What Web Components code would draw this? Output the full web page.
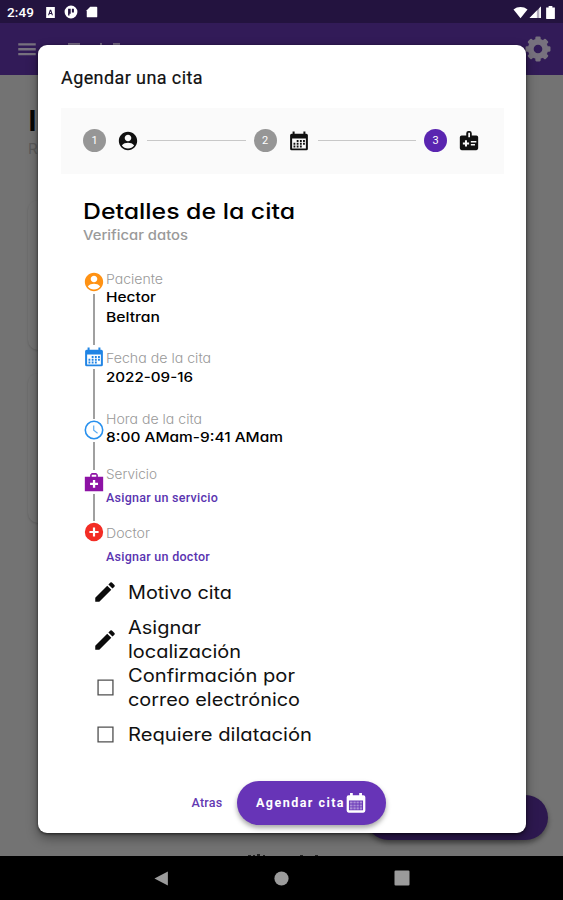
<!DOCTYPE html>
<html lang="es">
<head>
<meta charset="utf-8">
<title>Agendar una cita</title>
<style>
html,body{margin:0;width:563px;height:900px;overflow:hidden;background:#000}
</style>
</head>
<body>
<clinic-screen></clinic-screen>
<script>
const ICONS = {
  user: '<path fill-rule="evenodd" d="M12 2C6.48 2 2 6.48 2 12s4.480 10 10 10 10-4.480 10-10S17.520 2 12 2zm0 3.200c2 0 3.600 1.600 3.600 3.600S14 12.400 12 12.400 8.400 10.800 8.400 8.800 10 5.200 12 5.200zM5.300 17c1.200-2.200 4.500-3 6.700-3s5.500.8 6.700 3c-1.500 2.100-3.900 3.300-6.700 3.300S6.800 19.100 5.300 17z"/>',
  calendar: '<path fill-rule="evenodd" d="M5 1.500h2.200V4h9.600V1.500H19V4h1a1.700 1.700 0 0 1 1.700 1.700V20.500A1.700 1.700 0 0 1 20 22.200H4a1.700 1.700 0 0 1-1.700-1.700V5.700A1.700 1.700 0 0 1 4 4h1zM4.500 9.200v10.900h15V9.200z"/><path d="M9.500 11h2v2h-2zM13 11h2v2h-2zM16.400 11h2v2h-2zM6 14h2v2H6zM9.500 14h2v2h-2zM13 14h2v2h-2zM16.400 14h2v2h-2zM6 17h2v2H6zM9.500 17h2v2h-2zM13 17h2v2h-2z"/>',
  calgrid: '<path fill-rule="evenodd" d="M5.500 1.200h3V3.500h7V1.200h3v2.300H20a2.200 2.200 0 0 1 2.200 2.200v14.600a2.200 2.200 0 0 1-2.200 2.200H4a2.200 2.200 0 0 1-2.200-2.200V5.700A2.200 2.200 0 0 1 4 3.500h1.500zM4.300 9.300v10.500h15.400V9.300z"/><path d="M5.300 10.300h3v2.300h-3zM9.100 10.300h2.600v2.300H9.100zM12.500 10.300h2.600v2.300h-2.600zM16 10.300h2.700v2.300H16zM5.300 13.500h3v2.300h-3zM9.100 13.500h2.600v2.300H9.100zM12.500 13.500h2.600v2.300h-2.600zM16 13.500h2.700v2.300H16zM5.300 16.700h3V19h-3zM9.100 16.700h2.600V19H9.100zM12.500 16.700h2.600V19h-2.600zM16 16.700h2.700V19H16z" opacity=".45"/>',
  badge: '<path fill-rule="evenodd" d="M4 6h5V3.500A2.500 2.500 0 0 1 11.500 1h1A2.500 2.500 0 0 1 15 3.500V6h5a2 2 0 0 1 2 2v12a2 2 0 0 1-2 2H4a2 2 0 0 1-2-2V8a2 2 0 0 1 2-2zM11.200 3v5h1.900V3zM7.600 11.200v2.300H5.300v2.200h2.300V18h2.200v-2.300h2.300v-2.200H9.800v-2.300zM14 12v1.600h6V12zm0 3.400V17h4.500v-1.600z"/>',
  clock: '<circle cx="12" cy="12" r="9.500" fill="none" stroke="currentColor" stroke-width="1.700"/><path d="M11.700 7v5.300l4.200 3.200" fill="none" stroke="currentColor" stroke-width="1.300" opacity=".75"/>',
  kit: '<path fill-rule="evenodd" d="M2 6.200h5.800V4.200L9.600 2.200h4.800l1.800 2v2H22V22H2zM9.500 6.200h5V4h-5zM10.800 9.700v3H7.700v2.500h3.100v3h2.500v-3h3.100v-2.500h-3.100v-3z"/>',
  plus: '<path fill-rule="evenodd" d="M12 2a10 10 0 1 0 0 20 10 10 0 0 0 0-20zM10.800 7v3.800H7v2.400h3.800V17h2.400v-3.800H17v-2.400h-3.800V7z"/>',
  pencil: '<path d="M3 17.250V21h3.750L17.810 9.940l-3.750-3.750zM20.710 7.040a1 1 0 0 0 0-1.410l-2.340-2.340a1 1 0 0 0-1.410 0l-1.830 1.830 3.750 3.750z"/>',
  box: '<path d="M3.500 3.500h17v17h-17z" fill="none" stroke="currentColor" stroke-width="1.500"/>',
  menu: '<path d="M1.500 5h21v2.800h-21zM1.500 10.900h21v2.800h-21zM1.500 16.800h21v2.800h-21z"/>',
  gear: '<circle cx="12" cy="12" r="6.200" fill="none" stroke="currentColor" stroke-width="5"/><g id="t"><rect x="9.700" y="1.300" width="4.600" height="4" rx="1"/><rect x="9.700" y="18.700" width="4.600" height="4" rx="1"/><rect x="1.300" y="9.700" width="4" height="4.600" rx="1"/><rect x="18.700" y="9.700" width="4" height="4.600" rx="1"/></g><use href="#t" transform="rotate(45 12 12)"/>',
  app: '<path fill-rule="evenodd" d="M4 2h16v20H4zM10.800 7 7.500 17h2l.7-2.200h3.600l.7 2.200h2L13.200 7zM12 9.500l1.200 3.600h-2.400z"/>',
  disc: '<path fill-rule="evenodd" d="M12 1a11 11 0 1 0 0 22 11 11 0 0 0 0-22zM7 6.500h4.500V15H9.500v3H7zM13.500 6.500H17V13h-3.500z"/>',
  sd: '<path d="M9 3h10.500A1.500 1.500 0 0 1 21 4.500v15a1.500 1.500 0 0 1-1.500 1.500h-15A1.500 1.500 0 0 1 3 19.500V9z"/>',
  wifi: '<path d="M12 21 .8 7C4 4.300 8 3 12 3s8 1.300 11.200 4z"/>',
  signal: '<path d="M1 22 22 1v21z" opacity=".65"/><path d="M1 22 14.500 8.500V22zM19 4l3-3v21h-3z"/>',
  battery: '<path d="M5 4h4V1.500h6V4h4v17a1.500 1.500 0 0 1-1.500 1.500h-11A1.500 1.500 0 0 1 5 21z"/>',
  back: '<path d="M21 2v20L2 12z"/>',
  home: '<circle cx="12" cy="12" r="10"/>',
  recent: '<rect x="2" y="2" width="20" height="20" rx="1.500"/>'
};

class UiIcon extends HTMLElement {
  connectedCallback() {
    const s = this.getAttribute('size') || 22;
    this.attachShadow({mode: 'open'}).innerHTML =
      `<style>:host{display:block;flex:none;width:${s}px;height:${s}px}svg{display:block;fill:currentColor}</style>
       <svg width="${s}" height="${s}" viewBox="0 0 24 24">${ICONS[this.getAttribute('name')]}</svg>`;
  }
}

/* One line of text that fills the width given in "w":
   by letter spacing, or by wider glyphs when "wide" is set. */
class TextLine extends HTMLElement {
  connectedCallback() {
    this.attachShadow({mode: 'open'}).innerHTML =
      `<style>:host{display:flex;align-items:center;white-space:nowrap;flex:none}span{display:block;transform-origin:0 50%}</style><span><slot></slot></span>`;
    const w = +this.getAttribute('w');
    const span = this.shadowRoot.querySelector('span');
    const n = this.textContent.length;
    if (!w) return;
    const natural = span.getBoundingClientRect().width;
    if (this.hasAttribute('wide')) span.style.transform = `scaleX(${(w / natural).toFixed(4)})`;
    else span.style.letterSpacing = ((w - natural) / n).toFixed(3) + 'px';
  }
}

class StatusBar extends HTMLElement {
  connectedCallback() {
    this.attachShadow({mode: 'open'}).innerHTML = `
    <style>:host{display:flex;align-items:center;height:23px;padding:1px 5px 0 7px;box-sizing:border-box;background:#23133f;color:#fff;font:500 13.500px Roboto,sans-serif}
    .gap{flex:1}.l{display:flex;gap:7px;align-items:center;margin-left:10px}.r{display:flex;gap:1px;align-items:center}</style>
    <text-line w="27">2:49</text-line>
    <div class="l"><ui-icon name="app" size="13"></ui-icon><ui-icon name="disc" size="14"></ui-icon><ui-icon name="sd" size="14"></ui-icon></div>
    <div class="gap"></div>
    <div class="r"><ui-icon name="wifi" size="15"></ui-icon><ui-icon name="signal" size="13"></ui-icon><ui-icon name="battery" size="15"></ui-icon></div>`;
  }
}

class AppBar extends HTMLElement {
  connectedCallback() {
    this.attachShadow({mode: 'open'}).innerHTML = `
    <style>:host{display:flex;justify-content:space-between;height:52px;padding:0 11px 0 17px;background:#321b58;color:#77717e;align-items:center}</style>
    <ui-icon name="menu" size="20"></ui-icon><ui-icon name="gear" size="28"></ui-icon>`;
  }
}

class NavBar extends HTMLElement {
  connectedCallback() {
    this.attachShadow({mode: 'open'}).innerHTML = `
    <style>:host{display:flex;height:44px;background:#000;color:#9b9b9b;align-items:center;justify-content:center;gap:103px;padding-left:1px}</style>
    <ui-icon name="back" size="17"></ui-icon><ui-icon name="home" size="17"></ui-icon><ui-icon name="recent" size="18"></ui-icon>`;
  }
}

class StepBadge extends HTMLElement {
  connectedCallback() {
    this.attachShadow({mode: 'open'}).innerHTML = `
    <style>:host{display:flex;align-items:center;gap:11px;color:#111}
    b{width:23px;height:23px;border-radius:50%;background:#969696;color:#fff;font:400 11px/23px Roboto,sans-serif;text-align:center}
    :host([active]) b{background:#5a25b0}</style>
    <b><slot></slot></b><ui-icon name="${this.getAttribute('icon')}" size="22"></ui-icon>`;
  }
}

class StepBar extends HTMLElement {
  connectedCallback() {
    this.attachShadow({mode: 'open'}).innerHTML = `
    <style>:host{display:flex;align-items:center;width:443px;height:66px;box-sizing:border-box;padding:0 24px 1px 22px;background:#fafafa}
    i{flex:1;height:1px;background:#c8c8c8;margin:0 8px 0 8px}</style>
    <step-badge icon="user">1</step-badge><i></i><step-badge icon="calendar">2</step-badge><i></i><step-badge icon="badge" active>3</step-badge>`;
  }
}

class VisitTimeline extends HTMLElement {
  connectedCallback() {
    this.attachShadow({mode: 'open'}).innerHTML = `
    <style>:host{display:flex;margin-left:22px;height:297.500px;font-family:Inter,sans-serif;font-feature-settings:"cv11"}
    .rail{width:22px;display:flex;flex-direction:column;align-items:center;margin-right:1px}
    .rail i{width:1.500px;background:#a0a0a0}
    text-line{height:20px;color:#111}
    .k{font-size:13px;font-weight:300;color:#999}
    .v{font-size:13.500px;font-weight:500;color:#000}
    .a{font:500 12.500px Roboto,sans-serif;color:#5a34b0}</style>
    <div class="rail">
      <ui-icon name="user" style="color:#ff9214"></ui-icon><i style="height:51px;margin:1px 0"></i>
      <ui-icon name="calendar" style="color:#2185e5"></ui-icon><i style="height:50px;margin:.5px 0"></i>
      <ui-icon name="clock" style="color:#2790ee"></ui-icon><i style="height:28px;margin:1px 0"></i>
      <ui-icon name="kit" style="color:#8d12a5"></ui-icon><i style="height:27px;margin:.5px 0"></i>
      <ui-icon name="plus" style="color:#f32d25"></ui-icon>
    </div>
    <div>
      <text-line wide class="k" w="57" style="margin-top:-2px">Paciente</text-line>
      <text-line wide class="v" w="50" style="margin-top:-2px">Hector</text-line>
      <text-line wide class="v" w="54">Beltran</text-line>
      <text-line wide class="k" w="105" style="margin-top:21px">Fecha de la cita</text-line>
      <text-line wide class="v" w="87" style="margin-top:-1px">2022-09-16</text-line>
      <text-line wide class="k" w="96" style="margin-top:22px">Hora de la cita</text-line>
      <text-line wide class="v" w="177" style="margin-top:-2px">8:00 AMam-9:41 AMam</text-line>
      <text-line wide class="k" w="51" style="margin-top:17px">Servicio</text-line>
      <text-line class="a" w="112" style="margin-top:3px">Asignar un servicio</text-line>
      <text-line wide class="k" w="44" style="margin-top:16px">Doctor</text-line>
      <text-line class="a" w="104" style="margin-top:3px">Asignar un doctor</text-line>
    </div>`;
  }
}

class OptionRow extends HTMLElement {
  connectedCallback() {
    const pen = this.getAttribute('icon') === 'pencil';
    this.attachShadow({mode: 'open'}).innerHTML = `
    <style>:host{display:flex;align-items:center;margin-left:${pen ? 31 : 32}px;gap:${pen ? 10 : 12}px;color:${pen ? '#0b0b0b' : '#505050'}}
    ui-icon{margin-left:${pen ? 0 : 2}px}</style>
    <ui-icon name="${pen ? 'pencil' : 'box'}" size="${pen ? 26 : 21}"></ui-icon><div><slot></slot></div>`;
  }
}

class PillButton extends HTMLElement {
  connectedCallback() {
    this.attachShadow({mode: 'open'}).innerHTML = `
    <style>:host{display:flex;align-items:center;box-sizing:border-box;width:149px;height:44px;padding-left:19px;border-radius:22px;background:#6734b7;color:#fff;box-shadow:0 3px 5px rgba(0,0,0,.35);font:700 12.500px Roboto,sans-serif}</style>
    <slot></slot><ui-icon name="calgrid" size="22"></ui-icon>`;
  }
}

class AppointmentDialog extends HTMLElement {
  connectedCallback() {
    this.attachShadow({mode: 'open'}).innerHTML = `
    <style>:host{display:block;box-sizing:border-box;width:488px;height:788.500px;padding:21px 23px 0;border-radius:9px;background:#fff;box-shadow:0 5px 12px rgba(0,0,0,.4),0 1px 3px rgba(0,0,0,.6)}
    .t{font:400 18px Roboto,sans-serif;-webkit-text-stroke:.2px;color:#111;height:24px}
    step-bar{margin-top:18.500px}
    .h,.s,option-row{font-family:Inter,sans-serif;font-feature-settings:"cv11"}
    .h{font-size:22px;font-weight:500;height:30px;margin:21.500px 0 0 22px;color:#000}
    .s{font-size:13px;font-weight:500;height:18px;margin:.5px 0 0 22px;color:#9a9a9a}
    visit-timeline{margin-top:27px}
    option-row text-line{height:24px;font-size:18px;color:#111}
    .foot{display:flex;align-items:center;margin:23px 0 0 130.500px;gap:14.500px;height:44px}
    .b{font:500 12.500px Roboto,sans-serif;color:#6338b2}</style>
    <text-line class="t" w="142">Agendar una cita</text-line>
    <step-bar></step-bar>
    <text-line wide class="h" w="212">Detalles de la cita</text-line>
    <text-line wide class="s" w="105">Verificar datos</text-line>
    <visit-timeline></visit-timeline>
    <option-row icon="pencil" style="height:47px"><text-line wide w="104">Motivo cita</text-line></option-row>
    <option-row icon="pencil" style="height:48px"><text-line wide w="73">Asignar</text-line><text-line wide w="113">localización</text-line></option-row>
    <option-row icon="box" style="height:48px"><text-line wide w="167">Confirmación por</text-line><text-line wide w="172">correo electrónico</text-line></option-row>
    <option-row icon="box" style="height:46px"><text-line wide w="184">Requiere dilatación</text-line></option-row>
    <div class="foot"><text-line class="b" w="31">Atras</text-line>
    <pill-button><text-line w="89">Agendar cita</text-line></pill-button></div>`;
  }
}

class ClinicScreen extends HTMLElement {
  connectedCallback() {
    this.attachShadow({mode: 'open'}).innerHTML = `
    <style>:host{display:flex;flex-direction:column;position:relative;width:563px;height:900px;overflow:hidden}
    main{flex:1;position:relative;background:#737373;overflow:hidden}
    .i{position:absolute;left:28.500px;top:28px;font:700 28px/36px Inter,sans-serif;color:#050505}
    .r{position:absolute;left:28px;top:64px;font:400 15px/20px Inter,sans-serif;color:#5b5b5b}
    .card{position:absolute;left:28px;width:508px;height:150px;border-radius:10px;background:#737373;box-shadow:0 1px 2px rgba(0,0,0,.15);clip-path:inset(0 400px -6px -6px)}
    .fab{position:absolute;left:366px;top:720px;width:182px;height:45px;border-radius:23px;background:#2d184f;box-shadow:0 3px 5px rgba(0,0,0,.4)}
    .m{position:absolute;height:2px;background:#222}
    .p{position:absolute;height:2px;top:43px;background:#716680}
    appointment-dialog{position:absolute;left:38px;top:44.500px}</style>
    <status-bar></status-bar><app-bar></app-bar>
    <main><div class="i">I</div><div class="r">R</div><div class="card" style="top:125px"></div><div class="card" style="top:298px"></div>
    <div class="fab"></div>
    <div class="m" style="left:248px;top:780px;width:3px"></div><div class="m" style="left:253px;top:780px;width:2px"></div><div class="m" style="left:257px;top:779px;width:3px"></div><div class="m" style="left:263px;top:780px;width:2px"></div><div class="m" style="left:300px;top:780px;width:3px"></div><div class="m" style="left:315px;top:780px;width:3px"></div></main>
    <nav-bar></nav-bar>
    <div class="p" style="left:68px;width:12px"></div><div class="p" style="left:100px;width:2px"></div><div class="p" style="left:113px;width:7px"></div>
    <appointment-dialog></appointment-dialog>`;
  }
}

customElements.define('ui-icon', UiIcon);
customElements.define('status-bar', StatusBar);
customElements.define('app-bar', AppBar);
customElements.define('nav-bar', NavBar);
customElements.define('step-badge', StepBadge);
customElements.define('step-bar', StepBar);
customElements.define('visit-timeline', VisitTimeline);
customElements.define('option-row', OptionRow);
customElements.define('pill-button', PillButton);
customElements.define('appointment-dialog', AppointmentDialog);
customElements.define('text-line', TextLine);
customElements.define('clinic-screen', ClinicScreen);
</script>
</body>
</html>
